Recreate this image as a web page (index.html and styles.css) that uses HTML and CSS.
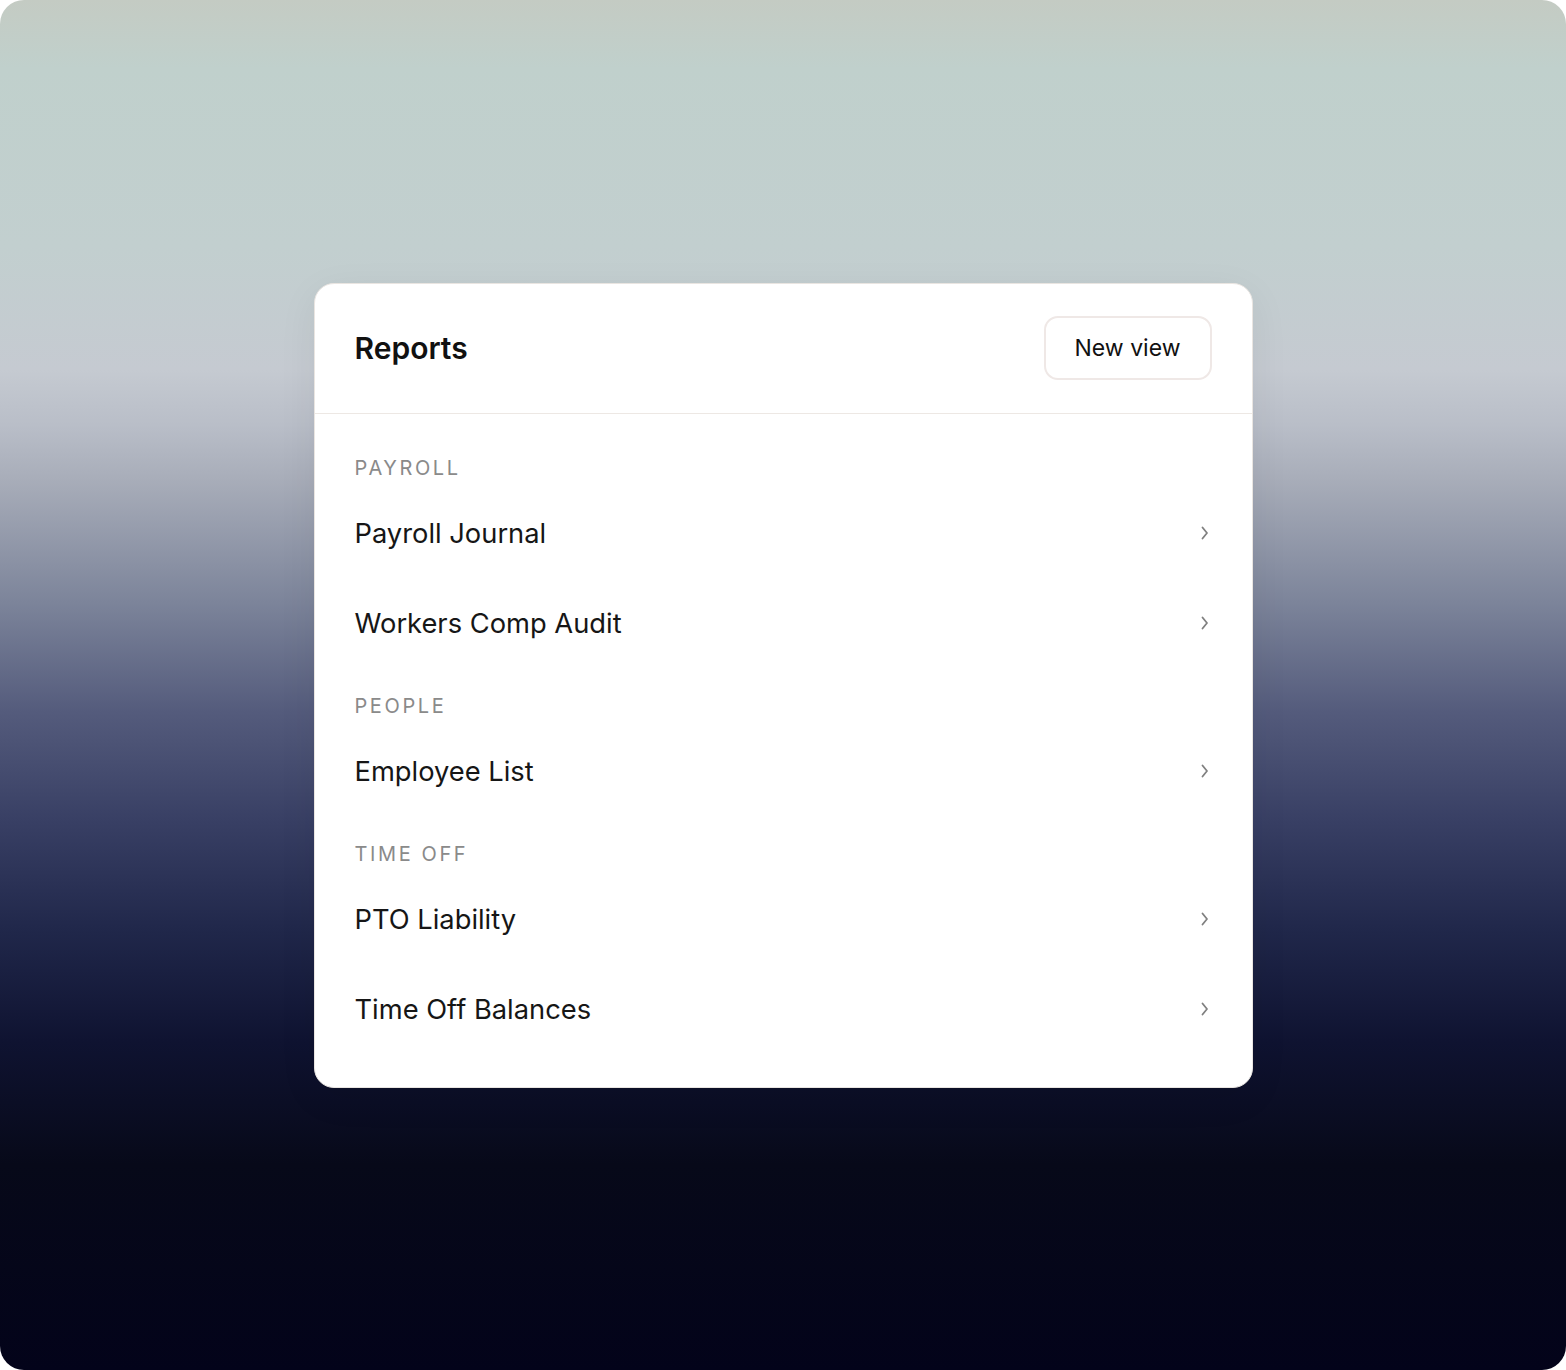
FILE: index.html
```html
<!DOCTYPE html>
<html lang="en">
<head>
<meta charset="utf-8">
<title>Reports</title>
<link rel="stylesheet" href="styles.css">
</head>
<body>
<div class="stage">
  <section class="card">
    <header class="card-header">
      <h1 class="title">Reports</h1>
      <button class="btn">New view</button>
    </header>
    <div class="card-body">
      <div class="group">
        <div class="group-label">PAYROLL</div>
        <a class="row"><span>Payroll Journal</span><svg class="chev" viewBox="0 0 8 14"><path d="M1.5 1.5 L6 7 L1.5 12.5"/></svg></a>
        <a class="row"><span>Workers Comp Audit</span><svg class="chev" viewBox="0 0 8 14"><path d="M1.5 1.5 L6 7 L1.5 12.5"/></svg></a>
      </div>
      <div class="group">
        <div class="group-label">PEOPLE</div>
        <a class="row"><span>Employee List</span><svg class="chev" viewBox="0 0 8 14"><path d="M1.5 1.5 L6 7 L1.5 12.5"/></svg></a>
      </div>
      <div class="group">
        <div class="group-label">TIME OFF</div>
        <a class="row"><span>PTO Liability</span><svg class="chev" viewBox="0 0 8 14"><path d="M1.5 1.5 L6 7 L1.5 12.5"/></svg></a>
        <a class="row"><span>Time Off Balances</span><svg class="chev" viewBox="0 0 8 14"><path d="M1.5 1.5 L6 7 L1.5 12.5"/></svg></a>
      </div>
    </div>
  </section>
</div>
</body>
</html>
```
FILE: styles.css
```css
* { box-sizing: border-box; }
html, body { margin: 0; padding: 0; background: #ffffff; }
body { font-family: Inter, "Noto Sans", "Liberation Sans", sans-serif; }

.stage {
  width: 1566px;
  height: 1370px;
  border-radius: 24px;
  overflow: hidden;
  background: linear-gradient(180deg,
    #c4cbc3 0%,
    #c0d0cc 5%,
    #c2cfcf 18%,
    #c5cad1 27%,
    #b9bec8 31%,
    #a8adb9 35%,
    #7c849a 44%,
    #545b7c 52%,
    #383f64 60%,
    #20274a 68%,
    #0f1331 76%,
    #070919 85%,
    #03031a 100%);
  display: flex;
  justify-content: center;
  align-items: flex-start;
  padding-top: 283px;
}

.card {
  width: 939px;
  height: 805px;
  background: #ffffff;
  border: 1px solid #e9e5e1;
  border-radius: 20px;
  box-shadow: 0 10px 40px rgba(0, 0, 0, 0.06);
  display: flex;
  flex-direction: column;
}

.card-header {
  height: 130px;
  border-bottom: 1px solid #ede8e4;
  display: flex;
  align-items: center;
  justify-content: space-between;
  padding: 0 40px 0 40px;
}

.title {
  margin: 0;
  margin-top: -2px;
  font-size: 30px;
  font-weight: 600;
  color: #111111;
  letter-spacing: 0;
}

.btn {
  width: 168px;
  height: 64px;
  margin-top: -2px;
  border: 2px solid #efe8e6;
  border-radius: 14px;
  background: #ffffff;
  font-family: inherit;
  font-size: 23px;
  color: #111111;
  padding: 0;
}

.card-body {
  padding: 42px 40px 0 40px;
  display: flex;
  flex-direction: column;
  gap: 26px;
}

.group { display: flex; flex-direction: column; }

.group-label {
  height: 24px;
  line-height: 24px;
  font-size: 20px;
  letter-spacing: 2.6px;
  color: #8a8a8a;
  margin-bottom: 8px;
}

.row {
  height: 90px;
  display: flex;
  align-items: center;
  justify-content: space-between;
  font-size: 27.3px;
  color: #161616;
}

.chev {
  width: 8px;
  height: 14px;
  margin-right: 3px;
  fill: none;
  stroke: #808080;
  stroke-width: 1.8;
  stroke-linecap: round;
  stroke-linejoin: round;
}
```
